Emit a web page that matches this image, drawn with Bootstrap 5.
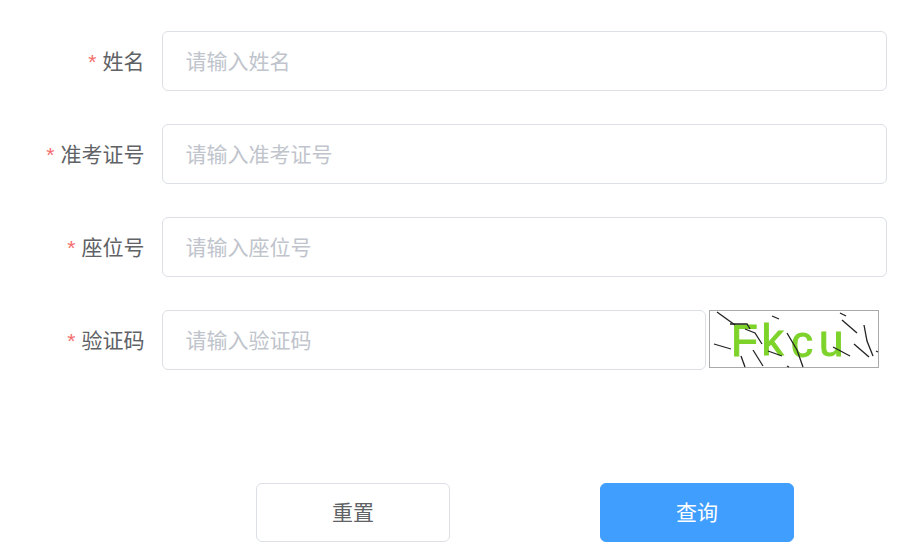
<!DOCTYPE html>
<html lang="zh-CN">
<head>
<meta charset="utf-8">
<title>查询</title>
<link href="https://cdn.jsdelivr.net/npm/bootstrap@5.3.0/dist/css/bootstrap.min.css" rel="stylesheet">
<style>
html,body{background:#fff;overflow:hidden}
body{font-family:"Liberation Sans","Noto Sans CJK SC",sans-serif;font-size:21px}
.query-form{padding:31px 19px 0 0;width:906px}
.field-row{height:60px;margin-bottom:33px}
.field-label{width:162px;padding-right:17.5px;text-align:right;color:#606266;font-size:21px;line-height:62px;flex:none;white-space:nowrap}
.req{color:#f56c6c;margin-right:6px}
.form-control.field-input{height:60px;border:1px solid #dcdfe6;border-radius:6px;padding:2px 22px 0 22.5px;font-size:21px;color:#606266;box-shadow:none}
.form-control.field-input::placeholder{color:#c0c4cc;opacity:1}
.captcha-pic{width:170px;height:58px;flex:none;margin-left:3px;margin-right:8px;display:block}
.action-row{margin-top:113px;padding-left:256px;gap:150px}
.btn.action-btn{width:194px;height:59px;border-radius:6px;font-size:21px;padding:0;line-height:57px}
.btn.reset-btn{background:#fff;border:1px solid #dcdfe6;color:#606266}
.btn.submit-btn{background:#409eff;border:1px solid #409eff;color:#fff}
</style>
</head>
<body>
<form class="query-form">
  <div class="d-flex field-row">
    <label class="field-label" for="f1"><span class="req">*</span>姓名</label>
    <input id="f1" class="form-control field-input" placeholder="请输入姓名">
  </div>
  <div class="d-flex field-row">
    <label class="field-label" for="f2"><span class="req">*</span>准考证号</label>
    <input id="f2" class="form-control field-input" placeholder="请输入准考证号">
  </div>
  <div class="d-flex field-row">
    <label class="field-label" for="f3"><span class="req">*</span>座位号</label>
    <input id="f3" class="form-control field-input" placeholder="请输入座位号">
  </div>
  <div class="d-flex field-row">
    <label class="field-label" for="f4"><span class="req">*</span>验证码</label>
    <input id="f4" class="form-control field-input" placeholder="请输入验证码">
    <svg class="captcha-pic" viewBox="0 0 170 58" role="img" aria-label="验证码">
      <defs><filter id="soft" x="-5%" y="-5%" width="110%" height="110%"><feGaussianBlur stdDeviation="0.35"/></filter></defs>
      <rect x="0.5" y="0.5" width="169" height="57" fill="#fff" stroke="#aaa"/>
      <g filter="url(#soft)">
        <g fill="#7ed32c" stroke="#7ed32c" stroke-width="1" font-family="Liberation Sans, sans-serif" font-size="44">
          <text x="22" y="46">F</text>
          <text x="52.5" y="45">k</text>
          <text x="82" y="47">c</text>
          <text x="110" y="46">u</text>
        </g>
        <g fill="none" stroke="#222" stroke-width="1.3">
          <path d="M8 2 26 15"/>
          <path d="M21 14H38L41 19"/>
          <path d="M36 19 46 23 53 34"/>
          <path d="M63 6 70 9"/>
          <path d="M131 3 137 6"/>
          <path d="M133 10 148 23"/>
          <path d="M155 15 158 31 164 46"/>
          <path d="M145 34 160 47"/>
          <path d="M167 41 169 42"/>
          <path d="M5 34 22 39"/>
          <path d="M32 46 36 57"/>
          <path d="M44 40 54 56"/>
          <path d="M78 23 88 40 94 57"/>
          <path d="M59 41 73 46"/>
          <path d="M124 37 141 46"/>
          <path d="M78 56 80 57"/>
        </g>
      </g>
    </svg>
  </div>
  <div class="d-flex action-row">
    <button type="button" class="btn action-btn reset-btn">重置</button>
    <button type="button" class="btn action-btn submit-btn">查询</button>
  </div>
</form>
<script src="https://cdn.jsdelivr.net/npm/bootstrap@5.3.0/dist/js/bootstrap.bundle.min.js"></script>
</body>
</html>
